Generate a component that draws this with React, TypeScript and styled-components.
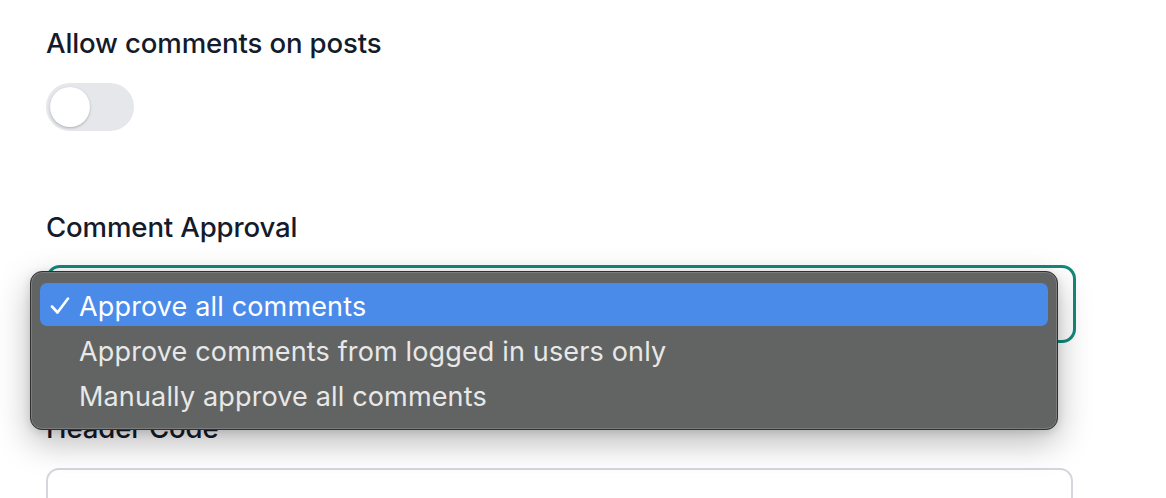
import React from "react";
import styled, { createGlobalStyle } from "styled-components";

const GlobalStyle = createGlobalStyle`
  html, body { margin: 0; padding: 0; background: #ffffff; }
  body { font-family: Inter, "Noto Sans", sans-serif; overflow: hidden; }
`;

const Page = styled.div`
  width: 1166px;
  height: 498px;
  overflow: hidden;
  box-sizing: border-box;
  padding: 25px 0 0 46px;
  display: flex;
  flex-direction: column;
`;

const Field = styled.div<{ $gapAfter: number }>`
  display: flex;
  flex-direction: column;
  margin-bottom: ${(p) => p.$gapAfter}px;
`;

const Label = styled.label<{ $gap?: number }>`
  font-family: Inter, "Noto Sans", sans-serif;
  font-size: 27.6px;
  line-height: 36px;
  font-weight: 500;
  color: #141b2b;
  margin-bottom: ${(p) => p.$gap ?? 22}px;
  letter-spacing: -0.15px;
`;

const Track = styled.div`
  width: 88px;
  height: 48px;
  border-radius: 24px;
  background: #e5e7eb;
  box-sizing: border-box;
  padding: 4px;
  display: flex;
  align-items: center;
`;

const Knob = styled.div`
  width: 40px;
  height: 40px;
  border-radius: 50%;
  background: #ffffff;
  box-shadow: 0 1px 3px rgba(0, 0, 0, 0.18), 0 1px 2px rgba(0, 0, 0, 0.08);
`;

const SelectWrap = styled.div`
  position: relative;
  width: 1030px;
`;

const SelectBox = styled.div`
  height: 78px;
  box-sizing: border-box;
  border: 3px solid #12897a;
  border-radius: 14px;
  background: #ffffff;
`;

const Menu = styled.ul`
  position: absolute;
  top: 6px;
  left: -16px;
  width: 1028px;
  height: 159px;
  box-sizing: border-box;
  margin: 0;
  padding: 11px 9px;
  list-style: none;
  background: #626463;
  border: 1px solid #2f302f;
  border-radius: 12px;
  box-shadow: inset 0 0 0 1px #7b7c7b, 0 12px 34px rgba(0, 0, 0, 0.28),
    0 2px 8px rgba(0, 0, 0, 0.12);
  display: flex;
  flex-direction: column;
  z-index: 2;
`;

const Item = styled.li<{ $selected?: boolean }>`
  height: 44px;
  margin-bottom: 2px;
  border-radius: 7px;
  background: ${(p) => (p.$selected ? "#4a8bea" : "transparent")};
  color: ${(p) => (p.$selected ? "#ffffff" : "#e8e8e8")};
  display: flex;
  align-items: center;
  padding-top: 3px;
  box-sizing: border-box;
  font-family: Inter, "Noto Sans", sans-serif;
  font-size: 27px;
  font-weight: 400;
  letter-spacing: 0.15px;
`;

const CheckSlot = styled.span`
  width: 39px;
  flex: none;
  display: flex;
  justify-content: flex-end;
  padding-right: 9px;
  box-sizing: border-box;
`;

const TextArea = styled.div`
  width: 1027px;
  height: 40px;
  box-sizing: border-box;
  border: 2px solid #d4d6dd;
  border-bottom: none;
  border-radius: 13px 13px 0 0;
  background: #ffffff;
`;

const Check = () => (
  <svg width="20" height="18" viewBox="0 0 20 18" aria-hidden>
    <polyline
      points="2,9.5 7.5,15.5 18,1.5"
      fill="none"
      stroke="#ffffff"
      strokeWidth="2.6"
      strokeLinecap="round"
      strokeLinejoin="round"
    />
  </svg>
);

const options = [
  "Approve all comments",
  "Approve comments from logged in users only",
  "Manually approve all comments",
];

export default function App() {
  return (
    <>
      <GlobalStyle />
      <Page>
        <Field $gapAfter={78}>
          <Label>Allow comments on posts</Label>
          <Track>
            <Knob />
          </Track>
        </Field>
        <Field $gapAfter={67}>
          <Label $gap={20}>Comment Approval</Label>
          <SelectWrap>
            <SelectBox />
            <Menu>
              {options.map((o, i) => (
                <Item key={o} $selected={i === 0}>
                  <CheckSlot>{i === 0 ? <Check /> : null}</CheckSlot>
                  {o}
                </Item>
              ))}
            </Menu>
          </SelectWrap>
        </Field>
        <Field $gapAfter={0}>
          <Label>Header Code</Label>
          <TextArea />
        </Field>
      </Page>
    </>
  );
}
